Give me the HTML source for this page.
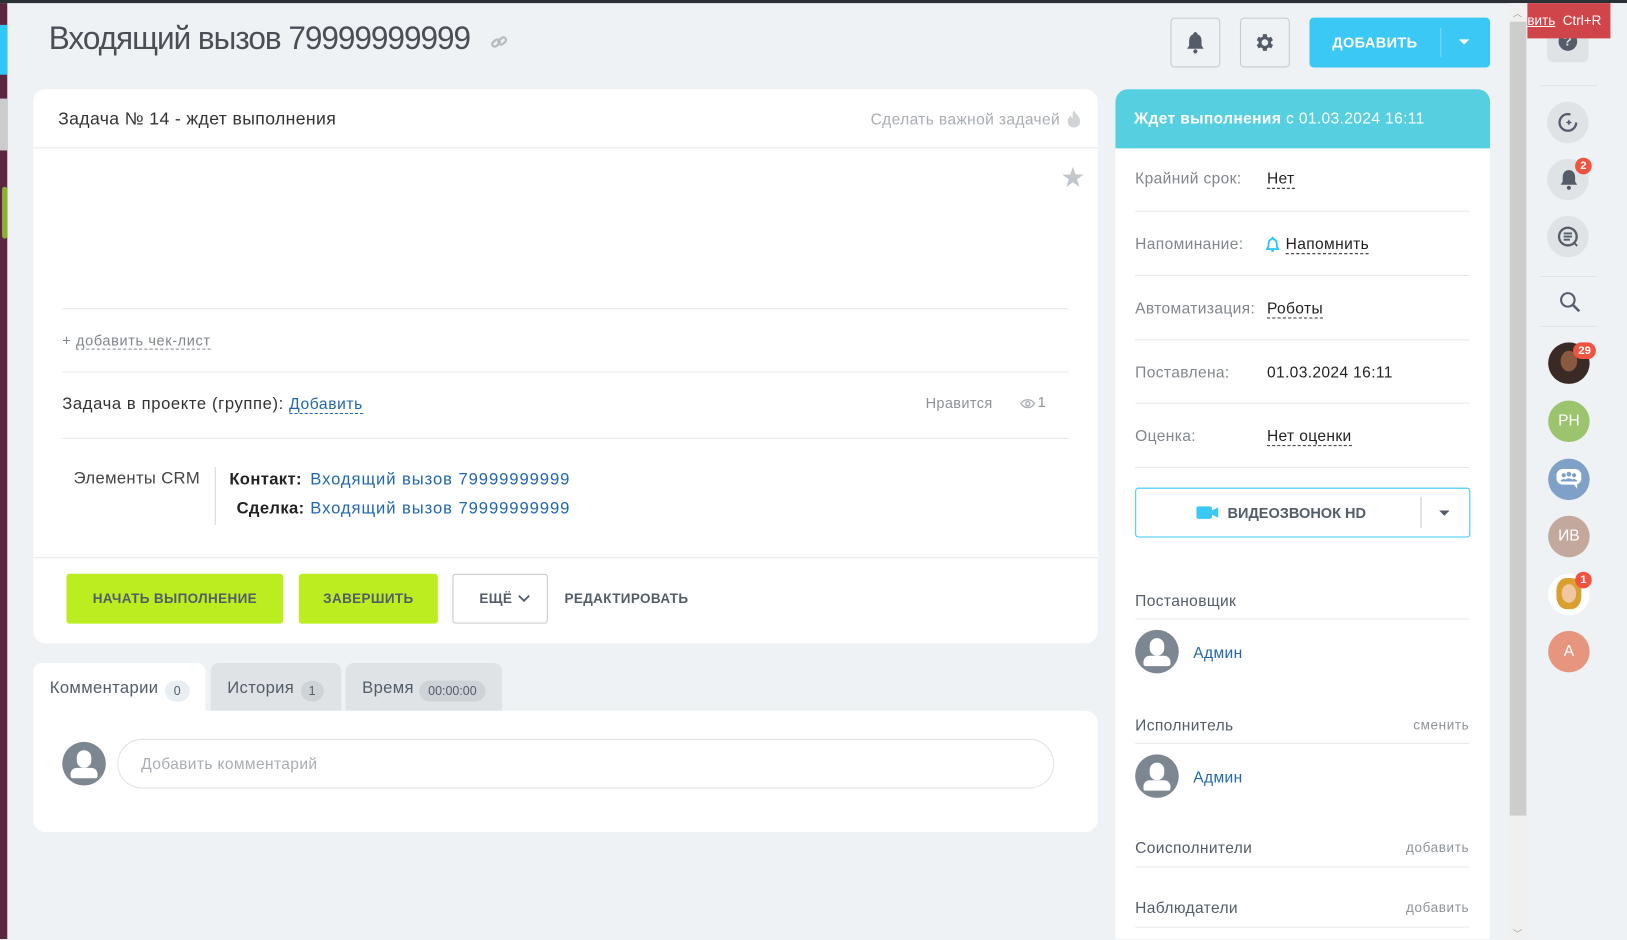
<!DOCTYPE html>
<html><head><meta charset="utf-8">
<style>
*{box-sizing:border-box;margin:0;padding:0}
html,body{width:1627px;height:939px;overflow:hidden;background:#eef2f4;font-family:"Liberation Sans","Noto Sans CJK SC",sans-serif;}
#w{position:absolute;left:0;top:0;width:1568px;height:905px;transform:scale(1.03763);transform-origin:0 0;background:#eef2f4;letter-spacing:0.35px}
.a{position:absolute}
.card{background:#fff;border-radius:12px}
.hr{position:absolute;height:1px;background:#e6e9ec}
.lbl{color:#80868e;font-size:15px}
.dash{border-bottom:1px dashed #333}
.blue{color:#2067b0}
.av{position:absolute;width:40px;height:40px;border-radius:50%;color:#fff;font-size:15px;text-align:center;line-height:40px;letter-spacing:0}
.badge{position:absolute;background:#f0533f;color:#fff;font-size:11px;font-weight:bold;border-radius:9px;height:16px;line-height:16px;padding:0 5px;letter-spacing:0}
.user{position:absolute;width:42px;height:42px;border-radius:50%;background:#7d8792;overflow:hidden}
</style></head><body><div id="w">
<div class="a" style="left:0;top:0;width:1568px;height:3px;background:#2b2f36"></div>
<div class="a" style="left:0;top:3px;width:7px;height:902px;background:#5a2640"></div>
<div class="a" style="left:0;top:24px;width:7px;height:48px;background:#2fc7f7"></div>
<div class="a" style="left:0;top:95px;width:7px;height:50px;background:#ccc"></div>
<div class="a" style="left:2px;top:180px;width:5px;height:50px;background:#8ab32a;border-radius:3px"></div>

<div class="a" style="left:47px;top:19px;font-size:31px;color:#4a4f57;letter-spacing:-1px;transform:scaleX(0.98);transform-origin:0 0">Входящий вызов 79999999999</div>
<svg class="a" style="left:472px;top:33px" width="18" height="16" viewBox="0 0 18 16"><g fill="none" stroke="#b8bcc1" stroke-width="2.2"><rect x="2" y="6" width="8" height="5" rx="2.5" transform="rotate(-40 6 8.5)"/><rect x="8" y="4" width="8" height="5" rx="2.5" transform="rotate(-40 12 6.5)"/></g></svg>

<div class="a" style="left:1128px;top:17px;width:48px;height:48px;border:1px solid #c6cacf;border-radius:4px"></div>
<svg class="a" style="left:1142px;top:30px" width="20" height="22" viewBox="0 0 20 22"><path d="M10 1a2 2 0 0 1 2 2c3 1 4 3.5 4 7v4l2 3H2l2-3v-4c0-3.5 1-6 4-7a2 2 0 0 1 2-2z" fill="#545c69"/><circle cx="10" cy="19.5" r="2" fill="#545c69"/></svg>
<div class="a" style="left:1195px;top:17px;width:48px;height:48px;border:1px solid #c6cacf;border-radius:4px"></div>
<svg class="a" style="left:1208px;top:30px" width="22" height="22" viewBox="0 0 24 24"><path fill="#545c69" d="M19.4 13a7.5 7.5 0 0 0 0-2l2.1-1.6-2-3.5-2.5 1a7.6 7.6 0 0 0-1.7-1L15 3.2h-4l-.4 2.7a7.6 7.6 0 0 0-1.7 1l-2.5-1-2 3.5L6.5 11a7.5 7.5 0 0 0 0 2l-2.1 1.6 2 3.5 2.5-1a7.6 7.6 0 0 0 1.7 1l.4 2.7h4l.4-2.7a7.6 7.6 0 0 0 1.7-1l2.5 1 2-3.5zM13 15.5a3.5 3.5 0 1 1 0-7 3.5 3.5 0 0 1 0 7z" transform="translate(-1 0)"/></svg>
<div class="a" style="left:1262px;top:17px;width:174px;height:48px;background:#3bc8f5;border-radius:4px"></div>
<div class="a" style="left:1262px;top:17px;width:126px;height:48px;line-height:48px;text-align:center;color:#fff;font-weight:bold;font-size:14px">ДОБАВИТЬ</div>
<div class="a" style="left:1388px;top:27px;width:1px;height:28px;background:#7fdcf9"></div>
<div class="a" style="left:1406px;top:38px;border-left:5px solid transparent;border-right:5px solid transparent;border-top:5px solid #fff"></div>

<!-- main card -->
<div class="a card" style="left:32px;top:86px;width:1026px;height:534px"></div>
<div class="a" style="left:56px;top:105px;font-size:17px;color:#333">Задача № 14 - ждет выполнения</div>
<div class="a" style="left:839px;top:107px;font-size:15px;color:#a8adb3">Сделать важной задачей</div>
<svg class="a" style="left:1028px;top:105px" width="14" height="18" viewBox="0 0 14 18"><path d="M7 1c1 4 6 6 6 11a6 6 0 0 1-12 0c0-3 2-4 3-6 0 2 1 3 2 3C5 6 6 3 7 1z" fill="#d0d3d7"/></svg>
<div class="hr" style="left:32px;top:142px;width:1026px"></div>
<div class="a" style="left:1023px;top:154px;font-size:22px;color:#c3c7cb">★</div>
<div class="hr" style="left:60px;top:297px;width:970px"></div>
<div class="a" style="left:60px;top:320px;font-size:14px;color:#80868e;letter-spacing:0.6px">+ <span style="border-bottom:1px dashed #80868e">добавить чек-лист</span></div>
<div class="hr" style="left:60px;top:358px;width:970px"></div>
<div class="a" style="left:60px;top:381px;font-size:16px;color:#333;letter-spacing:0.6px">Задача в проекте (группе): <span class="blue" style="border-bottom:1px dashed #2067b0;font-size:15px">Добавить</span></div>
<div class="a" style="left:892px;top:380px;font-size:14px;color:#8d9399">Нравится</div>
<svg class="a" style="left:983px;top:383px" width="15" height="12" viewBox="0 0 15 12"><path d="M1 6c3-5 10-5 13 0-3 5-10 5-13 0z" fill="none" stroke="#a8adb3" stroke-width="1.3"/><circle cx="7.5" cy="6" r="2" fill="none" stroke="#a8adb3" stroke-width="1.3"/></svg>
<div class="a" style="left:1000px;top:379px;font-size:14px;color:#8d9399">1</div>
<div class="hr" style="left:60px;top:422px;width:970px"></div>
<div class="a" style="left:71px;top:453px;font-size:16px;color:#444">Элементы CRM</div>
<div class="a" style="left:207px;top:450px;width:1px;height:56px;background:#d5d8dc"></div>
<div class="a" style="left:221px;top:454px;font-size:16px;color:#222;font-weight:bold">Контакт:</div>
<div class="a blue" style="left:299px;top:454px;font-size:16px;letter-spacing:0.9px">Входящий вызов 79999999999</div>
<div class="a" style="left:228px;top:482px;font-size:16px;color:#222;font-weight:bold">Сделка:</div>
<div class="a blue" style="left:299px;top:482px;font-size:16px;letter-spacing:0.9px">Входящий вызов 79999999999</div>
<div class="hr" style="left:32px;top:537px;width:1026px"></div>
<div class="a" style="left:64px;top:553px;width:209px;height:48px;background:#bbed21;border-radius:3px;text-align:center;line-height:48px;font-size:13px;color:#535c69;font-weight:bold">НАЧАТЬ ВЫПОЛНЕНИЕ</div>
<div class="a" style="left:288px;top:553px;width:134px;height:48px;background:#bbed21;border-radius:3px;text-align:center;line-height:48px;font-size:13px;color:#535c69;font-weight:bold">ЗАВЕРШИТЬ</div>
<div class="a" style="left:436px;top:553px;width:92px;height:48px;border:1px solid #c6cacf;border-radius:3px;line-height:46px;font-size:13px;color:#535c69;font-weight:bold;padding-left:25px">ЕЩЁ</div>
<svg class="a" style="left:499px;top:573px" width="12" height="8" viewBox="0 0 12 8"><path d="M1 1l5 5 5-5" fill="none" stroke="#535c69" stroke-width="1.8"/></svg>
<div class="a" style="left:544px;top:569px;font-size:13px;color:#535c69;font-weight:bold">РЕДАКТИРОВАТЬ</div>

<!-- tabs -->
<div class="a" style="left:32px;top:639px;width:166px;height:50px;background:#fff;border-radius:8px 8px 0 0"></div>
<div class="a" style="left:48px;top:655px;font-size:16px;color:#535c69">Комментарии</div>
<div class="a" style="left:159px;top:656px;width:24px;height:20px;border-radius:10px;background:#e9eef2;font-size:12px;color:#535c69;text-align:center;line-height:20px">0</div>
<div class="a" style="left:203px;top:639px;width:126px;height:46px;background:#dfe3e6;border-radius:8px 8px 0 0"></div>
<div class="a" style="left:219px;top:655px;font-size:16px;color:#535c69">История</div>
<div class="a" style="left:290px;top:656px;width:22px;height:20px;border-radius:10px;background:#ced3d7;font-size:12px;color:#535c69;text-align:center;line-height:20px">1</div>
<div class="a" style="left:333px;top:639px;width:151px;height:46px;background:#dfe3e6;border-radius:8px 8px 0 0"></div>
<div class="a" style="left:349px;top:655px;font-size:16px;color:#535c69">Время</div>
<div class="a" style="left:404px;top:656px;width:64px;height:20px;border-radius:10px;background:#ced3d7;font-size:12px;color:#535c69;text-align:center;line-height:20px;letter-spacing:0">00:00:00</div>
<div class="a" style="left:32px;top:685px;width:1026px;height:117px;background:#fff;border-radius:0 12px 12px 12px"></div>
<div class="user" style="left:60px;top:715px"><div class="a" style="left:14px;top:8px;width:14px;height:17px;border-radius:7px;background:#fff"></div><div class="a" style="left:8px;top:25px;width:26px;height:10px;border-radius:6px 6px 2px 2px;background:#fff"></div></div>
<div class="a" style="left:113px;top:712px;width:903px;height:48px;border:1px solid #e0e3e6;border-radius:24px;padding-left:22px;line-height:48px;font-size:15px;color:#a8adb3">Добавить комментарий</div>

<!-- right panel -->
<div class="a" style="left:1075px;top:86px;width:361px;height:819px;background:#fff;border-radius:12px 12px 0 0"></div>
<div class="a" style="left:1075px;top:86px;width:361px;height:57px;background:#56d0e0;border-radius:12px 12px 0 0"></div>
<div class="a" style="left:1093px;top:106px;font-size:15px;color:#fff"><b>Ждет выполнения</b> с 01.03.2024 16:11</div>
<div class="a lbl" style="left:1094px;top:164px">Крайний срок:</div>
<div class="a" style="left:1221px;top:164px;font-size:15px;color:#222"><span class="dash">Нет</span></div>
<div class="hr" style="left:1094px;top:203px;width:322px"></div>
<div class="a lbl" style="left:1094px;top:227px">Напоминание:</div>
<svg class="a" style="left:1220px;top:228px" width="13" height="15" viewBox="0 0 13 15"><path d="M6.5 1l1 1.5c2 .5 3 2 3 5v2l1.5 2.5H1L2.5 9.5v-2c0-3 1-4.5 3-5z" fill="none" stroke="#2fc7f7" stroke-width="1.8"/><circle cx="6.5" cy="13.5" r="1.3" fill="#2fc7f7"/></svg>
<div class="a" style="left:1239px;top:227px;font-size:15px;color:#222"><span class="dash">Напомнить</span></div>
<div class="hr" style="left:1094px;top:265px;width:322px"></div>
<div class="a lbl" style="left:1094px;top:289px">Автоматизация:</div>
<div class="a" style="left:1221px;top:289px;font-size:15px;color:#222"><span class="dash">Роботы</span></div>
<div class="hr" style="left:1094px;top:327px;width:322px"></div>
<div class="a lbl" style="left:1094px;top:351px">Поставлена:</div>
<div class="a" style="left:1221px;top:351px;font-size:15px;color:#222">01.03.2024 16:11</div>
<div class="hr" style="left:1094px;top:388px;width:322px"></div>
<div class="a lbl" style="left:1094px;top:412px">Оценка:</div>
<div class="a" style="left:1221px;top:412px;font-size:15px;color:#222"><span class="dash">Нет оценки</span></div>
<div class="hr" style="left:1094px;top:450px;width:322px"></div>
<div class="a" style="left:1094px;top:470px;width:323px;height:48px;border:1px solid #3bc8f5;border-radius:3px"></div>
<svg class="a" style="left:1153px;top:487px" width="22" height="14" viewBox="0 0 22 14"><rect x="0" y="1" width="15" height="12" rx="2" fill="#3bc8f5"/><path d="M15 5l6-3v10l-6-3z" fill="#3bc8f5"/></svg>
<div class="a" style="left:1183px;top:486px;font-size:14px;font-weight:bold;color:#535c69;letter-spacing:0">ВИДЕОЗВОНОК HD</div>
<div class="a" style="left:1369px;top:479px;width:1px;height:30px;background:#c6cacf"></div>
<div class="a" style="left:1387px;top:492px;border-left:5px solid transparent;border-right:5px solid transparent;border-top:5px solid #535c69"></div>
<div class="a" style="left:1094px;top:571px;font-size:15px;color:#535c69">Постановщик</div>
<div class="hr" style="left:1094px;top:596px;width:322px"></div>
<div class="user" style="left:1094px;top:607px"><div class="a" style="left:14px;top:8px;width:14px;height:17px;border-radius:7px;background:#fff"></div><div class="a" style="left:8px;top:25px;width:26px;height:10px;border-radius:6px 6px 2px 2px;background:#fff"></div></div>
<div class="a blue" style="left:1150px;top:621px;font-size:15px">Админ</div>
<div class="a" style="left:1094px;top:691px;font-size:15px;color:#535c69">Исполнитель</div>
<div class="a" style="left:1362px;top:691px;font-size:13px;color:#8d9399;letter-spacing:0.6px">сменить</div>
<div class="hr" style="left:1094px;top:716px;width:322px"></div>
<div class="user" style="left:1094px;top:727px"><div class="a" style="left:14px;top:8px;width:14px;height:17px;border-radius:7px;background:#fff"></div><div class="a" style="left:8px;top:25px;width:26px;height:10px;border-radius:6px 6px 2px 2px;background:#fff"></div></div>
<div class="a blue" style="left:1150px;top:741px;font-size:15px">Админ</div>
<div class="a" style="left:1094px;top:809px;font-size:15px;color:#535c69">Соисполнители</div>
<div class="a" style="left:1355px;top:809px;font-size:13px;color:#8d9399;letter-spacing:0.6px">добавить</div>
<div class="hr" style="left:1094px;top:835px;width:322px"></div>
<div class="a" style="left:1094px;top:867px;font-size:15px;color:#535c69">Наблюдатели</div>
<div class="a" style="left:1355px;top:867px;font-size:13px;color:#8d9399;letter-spacing:0.6px">добавить</div>
<div class="hr" style="left:1094px;top:893px;width:322px"></div>

<!-- scrollbar -->
<div class="a" style="left:1454px;top:3px;width:18px;height:902px;background:#f0f0f0"></div>
<div class="a" style="left:1455px;top:21px;width:16px;height:765px;background:#cdcdcd"></div>
<div class="a" style="left:1458px;top:6px;font-size:9px;color:#a0a0a0">︿</div>

<!-- right sidebar -->
<div class="a" style="left:1472px;top:3px;width:96px;height:902px;background:#eef2f4"></div>
<div class="a" style="left:1491px;top:17px;width:40px;height:43px;background:#dfe3e6;border-radius:6px"></div>
<div class="a" style="left:1502px;top:31px;width:18px;height:18px;border-radius:50%;background:#545c69;color:#dfe3e6;font-size:13px;font-weight:bold;text-align:center;line-height:18px">?</div>
<div class="a" style="left:1472px;top:3px;width:80px;height:34px;background:#d0454a"></div>
<div class="a" style="left:1472px;top:12px;font-size:13px;color:#fff;letter-spacing:0"><span style="text-decoration:underline">вить</span>&nbsp; Ctrl+R</div>
<div class="hr" style="left:1485px;top:82px;width:54px;background:#dfe3e6"></div>
<div class="av" style="left:1491px;top:98px;background:#dfe3e6"></div>
<svg class="a" style="left:1500px;top:107px" width="22" height="22" viewBox="0 0 22 22"><circle cx="11" cy="11" r="8" fill="none" stroke="#545c69" stroke-width="2.2" stroke-dasharray="40 10"/><path d="M12 8l1 2 2 1-2 1-1 2-1-2-2-1 2-1z" fill="#545c69"/></svg>
<div class="av" style="left:1491px;top:153px;background:#dfe3e6"></div>
<svg class="a" style="left:1502px;top:162px" width="20" height="22" viewBox="0 0 20 22"><path d="M10 2c4 0 6 3 6 7v4l2 3H2l2-3V9c0-4 2-7 6-7z" fill="#545c69"/><circle cx="10" cy="19" r="2" fill="#545c69"/></svg>
<div class="badge" style="left:1518px;top:152px">2</div>
<div class="av" style="left:1491px;top:208px;background:#dfe3e6"></div>
<svg class="a" style="left:1500px;top:217px" width="23" height="23" viewBox="0 0 23 23"><circle cx="11" cy="11" r="8.5" fill="none" stroke="#545c69" stroke-width="2.2"/><path d="M7 8h8M7 11h8M7 14h6M17 17l3 3" stroke="#545c69" stroke-width="1.8" fill="none"/></svg>
<div class="hr" style="left:1485px;top:266px;width:54px;background:#dfe3e6"></div>
<svg class="a" style="left:1502px;top:280px" width="22" height="22" viewBox="0 0 22 22"><circle cx="9" cy="9" r="6.5" fill="none" stroke="#545c69" stroke-width="2"/><path d="M14 14l6 6" stroke="#545c69" stroke-width="2.4"/></svg>
<div class="hr" style="left:1485px;top:314px;width:54px;background:#dfe3e6"></div>
<div class="av" style="left:1492px;top:330px;background:#3a2a25"><div class="a" style="left:12px;top:8px;width:16px;height:20px;border-radius:50%;background:#8a5a40"></div></div>
<div class="badge" style="left:1516px;top:330px">29</div>
<div class="av" style="left:1492px;top:386px;background:#9cc46f">PH</div>
<div class="av" style="left:1492px;top:442px;background:#7fa0c7"></div>
<svg class="a" style="left:1499px;top:451px" width="26" height="22" viewBox="0 0 26 22"><rect x="1" y="1" width="24" height="15" rx="6" fill="#fff"/><path d="M17 15l4 5v-5z" fill="#fff"/><g fill="#7fa0c7"><circle cx="8" cy="7" r="2"/><circle cx="13" cy="6" r="2.3"/><circle cx="18" cy="7" r="2"/><path d="M5 13c0-3 6-3 6 0zM9 13c0-4 8-4 8 0zM15 13c0-3 6-3 6 0z"/></g></svg>
<div class="av" style="left:1492px;top:497px;background:#c3a89d">ИВ</div>
<div class="av" style="left:1492px;top:553px;background:#fff"><div class="a" style="left:8px;top:4px;width:24px;height:30px;border-radius:40%;background:#d9a030"></div><div class="a" style="left:13px;top:10px;width:14px;height:18px;border-radius:50%;background:#f2c6a0"></div></div>
<div class="badge" style="left:1518px;top:551px">1</div>
<div class="av" style="left:1492px;top:608px;background:#e8957f">A</div>
<div class="a" style="left:1458px;top:893px;font-size:9px;color:#a0a0a0">﹀</div>
</div></body></html>
